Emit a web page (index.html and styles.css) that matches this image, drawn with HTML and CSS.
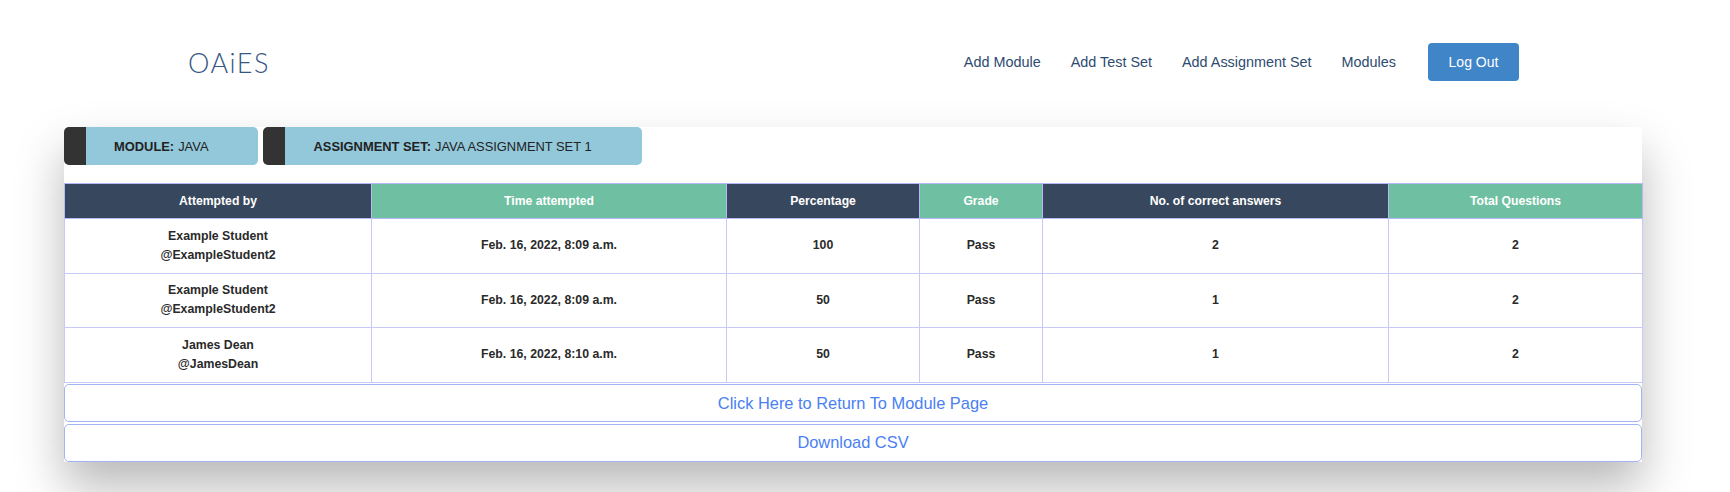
FILE: index.html
```html
<!DOCTYPE html>
<html lang="en">
<head>
<meta charset="utf-8">
<title>OAiES - Assignment Results</title>
<link rel="stylesheet" href="styles.css">
</head>
<body>
<header class="topbar">
  <a class="logo" href="#">OAiES</a>
  <nav class="nav">
    <a class="nav-link" href="#">Add Module</a>
    <a class="nav-link" href="#">Add Test Set</a>
    <a class="nav-link" href="#">Add Assignment Set</a>
    <a class="nav-link" href="#">Modules</a>
    <a class="btn-logout" href="#">Log Out</a>
  </nav>
</header>
<main class="page">
  <section class="card">
    <div class="badges">
      <div class="badge"><b>MODULE:</b> JAVA</div>
      <div class="badge"><b>ASSIGNMENT SET:</b> JAVA ASSIGNMENT SET 1</div>
    </div>
    <table class="results">
      <colgroup>
        <col class="c1"><col class="c2"><col class="c3"><col class="c4"><col class="c5"><col class="c6">
      </colgroup>
      <thead>
        <tr>
          <th class="dark">Attempted by</th>
          <th class="green">Time attempted</th>
          <th class="dark">Percentage</th>
          <th class="green">Grade</th>
          <th class="dark">No. of correct answers</th>
          <th class="green">Total Questions</th>
        </tr>
      </thead>
      <tbody>
        <tr>
          <td>Example Student<br>@ExampleStudent2</td>
          <td>Feb. 16, 2022, 8:09 a.m.</td>
          <td>100</td>
          <td>Pass</td>
          <td>2</td>
          <td>2</td>
        </tr>
        <tr>
          <td>Example Student<br>@ExampleStudent2</td>
          <td>Feb. 16, 2022, 8:09 a.m.</td>
          <td>50</td>
          <td>Pass</td>
          <td>1</td>
          <td>2</td>
        </tr>
        <tr>
          <td>James Dean<br>@JamesDean</td>
          <td>Feb. 16, 2022, 8:10 a.m.</td>
          <td>50</td>
          <td>Pass</td>
          <td>1</td>
          <td>2</td>
        </tr>
      </tbody>
    </table>
    <a class="action" href="#">Click Here to Return To Module Page</a>
    <a class="action" href="#">Download CSV</a>
  </section>
</main>
</body>
</html>
```
FILE: styles.css
```css
* { box-sizing: border-box; }

html, body {
  margin: 0;
  padding: 0;
  background: #ffffff;
  font-family: "Liberation Sans", Arial, Helvetica, sans-serif;
  overflow: hidden;
}

a { text-decoration: none; }

.topbar {
  display: flex;
  align-items: center;
  justify-content: space-between;
  height: 107px;
  padding: 43px 211px 26px 188px;
}

.logo {
  font-family: "Lato", "Open Sans", sans-serif;
  font-weight: 300;
  font-size: 27px;
  letter-spacing: 1.5px;
  color: #365683;
  line-height: 1;
}

.nav {
  display: flex;
  align-items: center;
  gap: 30px;
}

.nav-link {
  font-size: 14.4px;
  color: #2d4b70;
}

.btn-logout {
  display: flex;
  align-items: center;
  justify-content: center;
  width: 91px;
  height: 38px;
  margin-left: 2px;
  background: #3f85c8;
  border-radius: 4px;
  color: #ffffff;
  font-size: 14px;
}

.page {
  padding: 20px 0 40px 64px;
}

.card {
  width: 1578px;
  background: #ffffff;
  box-shadow: 0 25px 45px rgba(0, 0, 0, 0.28);
  display: flex;
  flex-direction: column;
}

.badges {
  display: flex;
  gap: 5px;
  margin-bottom: 18px;
}

.badge {
  height: 38px;
  display: flex;
  align-items: center;
  background: #93c8da;
  border-left: 22px solid #333333;
  border-radius: 5px;
  padding: 0 50px 0 28px;
  font-size: 12.9px;
  color: #222222;
}

.badge b { margin-right: 4px; }

.results {
  width: 1578px;
  table-layout: fixed;
  border-collapse: collapse;
  border: 1px solid #a9aaf0;
}

.c1 { width: 307px; }
.c2 { width: 355px; }
.c3 { width: 193px; }
.c4 { width: 123px; }
.c5 { width: 346px; }
.c6 { width: 254px; }

.results th {
  height: 35px;
  padding: 0 6px;
  font-size: 12.2px;
  font-weight: bold;
  color: #ffffff;
  text-align: center;
  border: 1px solid #b9b9f5;
}

.results th.dark { background: #37475d; }
.results th.green { background: #6fc0a2; }

.results td {
  height: 54.6px;
  padding: 0 6px;
  font-size: 12.3px;
  line-height: 19px;
  font-weight: bold;
  color: #2a2a2a;
  text-align: center;
  vertical-align: middle;
  border: 1px solid #c9c9f7;
}

.action {
  display: flex;
  align-items: center;
  justify-content: center;
  height: 38px;
  margin-top: 1.5px;
  border: 1px solid #a3b3f3;
  border-radius: 5px;
  color: #4a80f2;
  font-size: 16.4px;
  background: #ffffff;
}
```
